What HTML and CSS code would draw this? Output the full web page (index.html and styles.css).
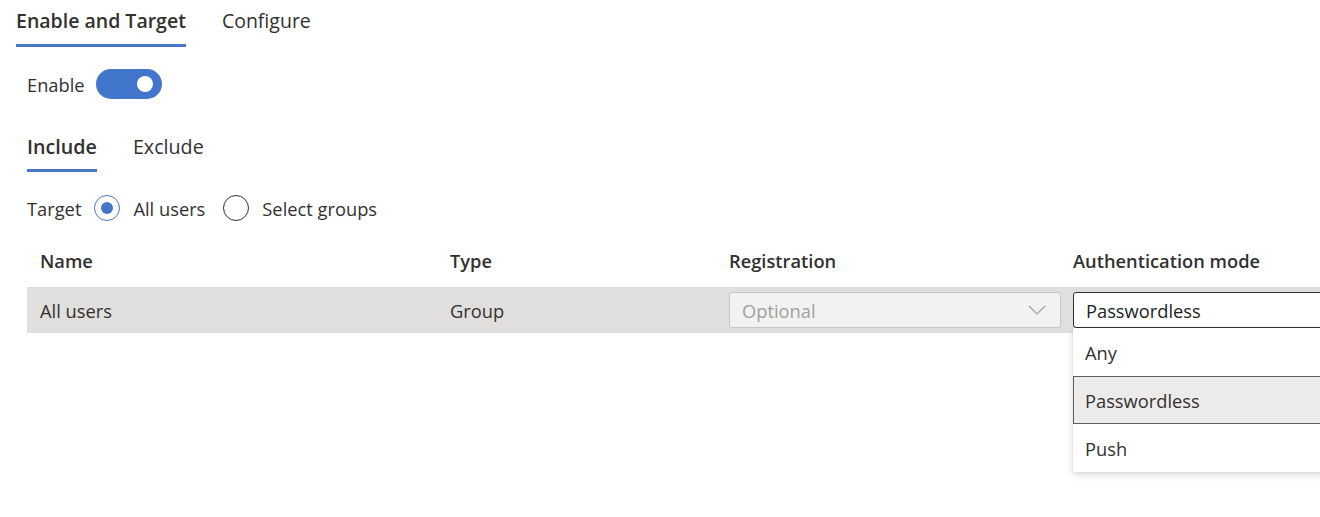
FILE: index.html
```html
<!DOCTYPE html>
<html lang="en">
<head>
<meta charset="utf-8">
<title>Enable and Target</title>
<link rel="stylesheet" href="styles.css">
</head>
<body>
<div class="page">
  <nav class="tabs">
    <div class="tab active">Enable and Target</div>
    <div class="tab">Configure</div>
  </nav>

  <section class="content">
    <div class="enable-row">
      <span class="label">Enable</span>
      <span class="toggle"><span class="knob"></span></span>
    </div>

    <nav class="subtabs">
      <div class="subtab active">Include</div>
      <div class="subtab">Exclude</div>
    </nav>

    <div class="target-row">
      <span class="label">Target</span>
      <label class="radio-opt"><span class="radio checked"></span><span>All users</span></label>
      <label class="radio-opt"><span class="radio"></span><span>Select groups</span></label>
    </div>

    <div class="table">
      <div class="thead">
        <div class="th">Name</div>
        <div class="th">Type</div>
        <div class="th">Registration</div>
        <div class="th">Authentication mode</div>
      </div>
      <div class="trow">
        <div class="td">All users</div>
        <div class="td">Group</div>
        <div class="td">
          <div class="select disabled">
            <span>Optional</span>
            <svg class="chev" width="18" height="10" viewBox="0 0 18 10"><path d="M1 1 L9 9 L17 1" fill="none" stroke="#a19f9d" stroke-width="1.2"/></svg>
          </div>
        </div>
        <div class="td auth">
          <div class="select open"><span>Passwordless</span></div>
          <ul class="menu">
            <li class="opt">Any</li>
            <li class="opt selected">Passwordless</li>
            <li class="opt">Push</li>
          </ul>
        </div>
      </div>
    </div>
  </section>
</div>
</body>
</html>
```

FILE: styles.css
```css
html, body {
  margin: 0;
  padding: 0;
  overflow: hidden;
  background: #ffffff;
}

body {
  font-family: "Segoe UI", "Open Sans", "Noto Sans", sans-serif;
  font-size: 18.3px;
  color: #323130;
}

.page {
  width: 1320px;
  height: 517px;
  overflow: hidden;
}

.tabs {
  display: flex;
  gap: 36px;
  padding: 7px 0 0 16px;
}

.tab {
  padding: 0 0 9px;
  font-size: 19.5px;
  line-height: 28px;
  border-bottom: 3px solid transparent;
}

.tab.active {
  font-weight: 600;
  border-bottom-color: #4a78c8;
}

.content {
  padding-left: 27px;
}

.enable-row {
  display: flex;
  align-items: center;
  gap: 11px;
  margin-top: 22px;
  height: 30px;
}

.toggle {
  width: 66px;
  height: 30px;
  border-radius: 15px;
  background: #4275cc;
  display: flex;
  align-items: center;
  justify-content: flex-end;
  padding-right: 9px;
  box-sizing: border-box;
}

.knob {
  width: 16px;
  height: 16px;
  border-radius: 50%;
  background: #ffffff;
}

.subtabs {
  display: flex;
  gap: 36px;
  margin-top: 34px;
}

.subtab {
  font-size: 19.7px;
  line-height: 28px;
  padding-bottom: 8px;
  border-bottom: 3px solid transparent;
}

.subtab.active {
  font-weight: 600;
  border-bottom-color: #4a78c8;
}

.target-row {
  display: flex;
  align-items: center;
  margin-top: 21px;
  height: 30px;
}

.target-row .label {
  margin-right: 13px;
}

.radio-opt {
  display: flex;
  align-items: center;
  gap: 13px;
  margin-right: 18px;
}

.radio {
  width: 26px;
  height: 26px;
  border: 1.3px solid #323130;
  border-radius: 50%;
  box-sizing: border-box;
  display: flex;
  align-items: center;
  justify-content: center;
}

.radio.checked {
  border-color: #4a78c8;
}

.radio.checked::after {
  content: "";
  width: 12px;
  height: 12px;
  border-radius: 50%;
  background: #4275cc;
}

.table {
  margin-top: 10px;
  width: 1420px;
}

.thead, .trow {
  display: grid;
  grid-template-columns: 410px 280px 344px 386px;
}

.thead {
  height: 54px;
  align-items: center;
}

.th {
  font-weight: 600;
  padding-left: 13px;
}

.th:nth-child(3), .th:nth-child(4) {
  padding-left: 12px;
}

.trow {
  height: 46px;
  align-items: center;
  background: #e1dfdd;
}

.td {
  padding-left: 13px;
}

.td:nth-child(3) {
  padding-left: 12px;
}

.td.auth {
  padding-left: 12px;
  position: relative;
}

.select {
  height: 36px;
  box-sizing: border-box;
  border-radius: 3px;
  display: flex;
  align-items: center;
  justify-content: space-between;
  padding: 0 12px;
}

.select.disabled {
  background: #f3f2f1;
  border: 1px solid #c8c6c4;
  color: #a19f9d;
  padding-right: 14px;
}

.select.open {
  background: #ffffff;
  border: 1px solid #323130;
  color: #201f1e;
}

.menu {
  position: absolute;
  left: 12px;
  right: 0;
  top: 100%;
  margin: 0;
  padding: 0;
  list-style: none;
  background: #ffffff;
  box-shadow: 0 3px 8px rgba(0, 0, 0, 0.14), 0 0 3px rgba(0, 0, 0, 0.08);
}

.opt {
  height: 48px;
  display: flex;
  align-items: center;
  padding-left: 12px;
  box-sizing: border-box;
}

.opt.selected {
  background: #edebe9;
  border: 1px solid #605e5c;
  border-right: none;
  padding-left: 11px;
}
```
